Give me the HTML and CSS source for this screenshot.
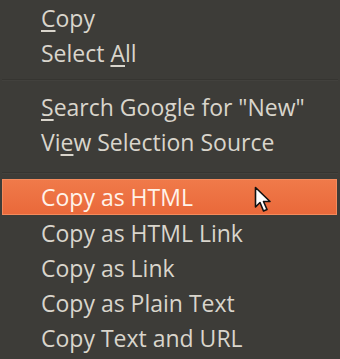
FILE: index.html
```html
<!DOCTYPE html>
<html>
<head>
<meta charset="utf-8">
<link rel="stylesheet" href="styles.css">
</head>
<body>
<div class="menu">
  <div class="item"><u>C</u>opy</div>
  <div class="item">Select <u>A</u>ll</div>
  <div class="sep sep1"></div>
  <div class="item"><u>S</u>earch Google for "New"</div>
  <div class="item">Vi<u>e</u>w Selection Source</div>
  <div class="sep sep2"></div>
  <div class="item active">Copy as HTML</div>
  <div class="item">Copy as HTML Link</div>
  <div class="item">Copy as Link</div>
  <div class="item">Copy as Plain Text</div>
  <div class="item">Copy Text and URL</div>
  <svg class="cursor" width="20" height="28" viewBox="0 0 20 28">
    <path d="M1.5 1.5 L1.5 21 L6 16.5 L9.5 25 L13 23.5 L9.5 15.5 L16 15.5 Z" fill="#ffffff" stroke="#111111" stroke-width="1.6" stroke-linejoin="round"/>
  </svg>
</div>
</body>
</html>
```

FILE: styles.css
```css
html, body {
  margin: 0;
  padding: 0;
  background: #3d3c38;
}
.menu {
  position: relative;
  width: 340px;
  height: 359px;
  background: #3d3c38;
  font-family: "Open Sans", "Noto Sans", sans-serif;
  font-size: 23px;
  color: #d9d5cc;
  overflow: hidden;
}
.item {
  height: 35px;
  line-height: 36px;
  padding-left: 41px;
  white-space: nowrap;
}
.item u {
  text-decoration-thickness: 2px;
  text-underline-offset: 3px;
}
.sep {
  height: 1px;
  background: #363531;
  border-bottom: 1px solid #42413d;
  margin-left: 2px;
  margin-right: 2px;
}
.sep1 {
  margin-top: 9px;
  margin-bottom: 8px;
}
.sep2 {
  margin-top: 13px;
  margin-bottom: 5px;
}
.item.active {
  height: 36px;
  line-height: 37px;
  margin: 0 3px 0 2px;
  padding-left: 39px;
  color: #fff3ea;
  background: linear-gradient(#f07a4a, #e9683a);
  box-shadow: inset 0 0 0 1px #f48a5c;
}
.cursor {
  position: absolute;
  left: 254px;
  top: 186px;
}
```
